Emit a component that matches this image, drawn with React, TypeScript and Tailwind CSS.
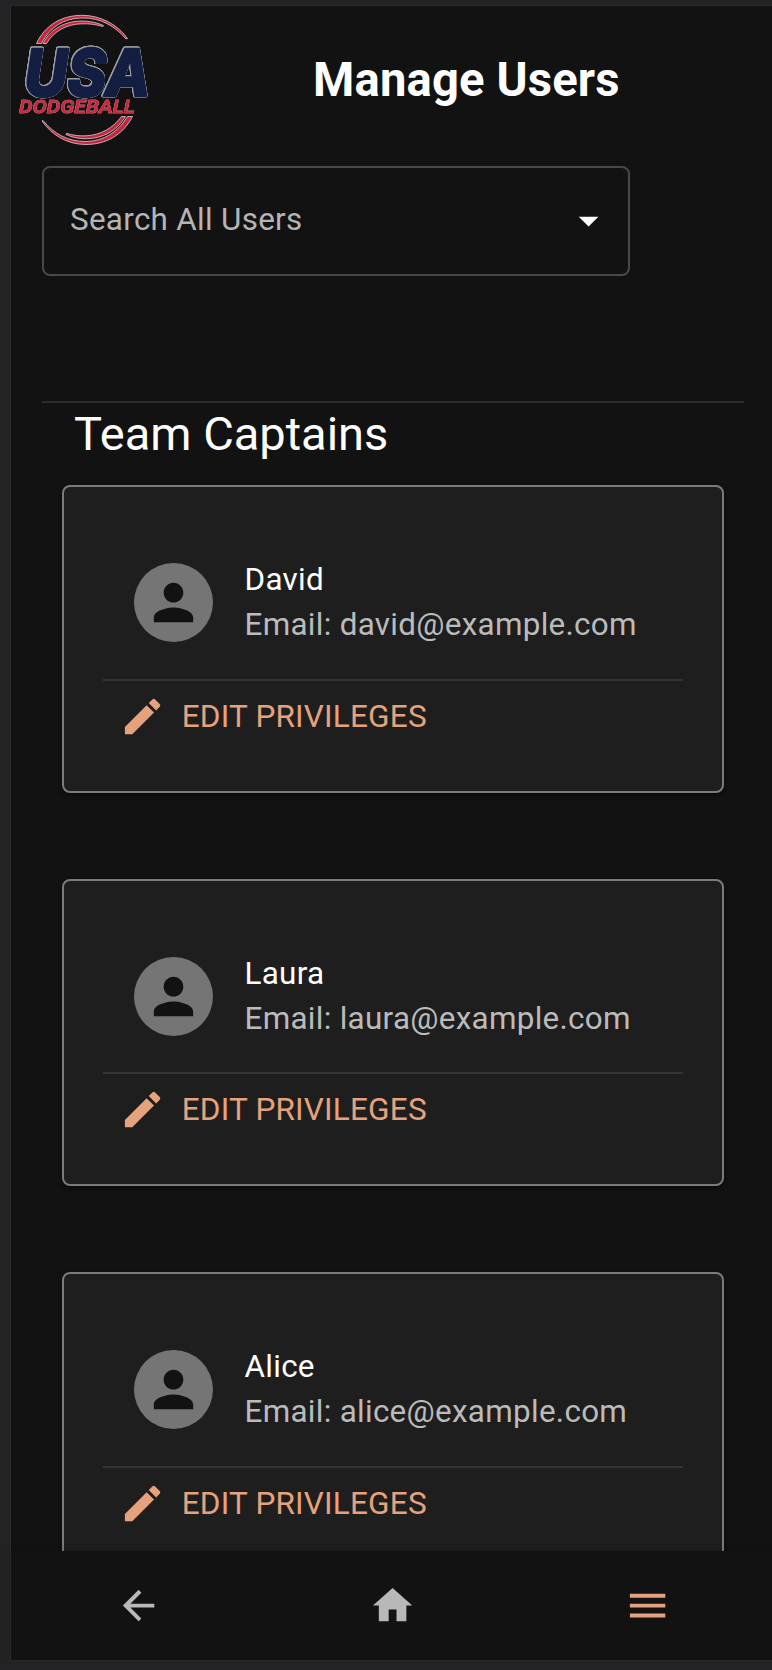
import React from "react";

const users = [
  { name: "David", email: "david@example.com" },
  { name: "Laura", email: "laura@example.com" },
  { name: "Alice", email: "alice@example.com" },
];

const icons = {
  person: "M12 12c2.21 0 4-1.79 4-4s-1.79-4-4-4-4 1.79-4 4 1.79 4 4 4zm0 2c-2.67 0-8 1.34-8 4v2h16v-2c0-2.66-5.33-4-8-4z",
  edit: "M3 17.25V21h3.75L17.81 9.94l-3.75-3.75L3 17.25zM20.71 7.04c.39-.39.39-1.02 0-1.41l-2.34-2.34a.9959.9959 0 0 0-1.41 0l-1.83 1.83 3.75 3.75 1.83-1.83z",
  back: "M20 11H7.83l5.59-5.59L12 4l-8 8 8 8 1.41-1.41L7.83 13H20v-2z",
  home: "M10 20v-6h4v6h5v-8h3L12 3 2 12h3v8z",
  menu: "M3 18h18v-2H3v2zm0-5h18v-2H3v2zm0-7v2h18V6H3z",
  dropDown: "M7 10l5 5 5-5z",
};

function Icon({ name, className = "" }: { name: keyof typeof icons; className?: string }) {
  return (
    <svg viewBox="0 0 24 24" fill="currentColor" className={`shrink-0 ${className}`} aria-hidden="true">
      <path d={icons[name]} />
    </svg>
  );
}

function Logo() {
  return (
    <svg viewBox="17 11 140 140" className="h-[140px] w-[140px] shrink-0 overflow-visible" role="img" aria-label="USA Dodgeball">
      <g stroke="#d9ccd0" strokeWidth="0.8" fill="#c4283f" strokeLinejoin="round">
        <path d="M36.500 43.500C45 25 62 15.300 82 15.300C101 15.300 118 25 127.500 38.500L126 39C115 26 101 18 83 18C64 18 50 27 41.500 43.500Z" />
        <path d="M43 43.500C51 28 66 21 82 21C90 21 97 22.500 103.500 25.500L103 26.500C96 24.500 89 23.500 82 23.800C67 24 54 31 46.500 43.500Z" />
        <path d="M132.500 116.500C123 135 106 144.500 86 144.500C66 144.500 51 134 42 121L43 120.500C54 134 68 141.500 86 141.500C104 141 118 132 127.500 116.500Z" />
        <path d="M125.500 116.500C117 131 103 138.500 86 138.800C79 138.800 72 137.500 66 134.500L66.500 133.300C73 135.500 79 136 86 135.800C101 135 113 128 121.500 116.500Z" />
      </g>
      <text x="24.500" y="95.500" fontFamily="Inter, sans-serif" fontSize="64" fontWeight="800" fontStyle="italic" textLength="126" lengthAdjust="spacingAndGlyphs" strokeLinejoin="round" fill="#131e42" stroke="#131e42" strokeWidth="2.400" className="[filter:drop-shadow(0.7px_0_0_#9a9ea8)_drop-shadow(-0.7px_0_0_#9a9ea8)_drop-shadow(0_0.5px_0_#9a9ea8)_drop-shadow(0_-0.5px_0_#9a9ea8)]">USA</text>
      <text x="19" y="113" fontFamily="Roboto, sans-serif" fontSize="18" fontWeight="500" fontStyle="italic" textLength="116" lengthAdjust="spacingAndGlyphs" fill="#c4283f" stroke="#c4283f" strokeWidth="0.7" className="[filter:drop-shadow(0_0_0.6px_#ffffff)]">DODGEBALL</text>
    </svg>
  );
}

function UserCard({ name, email }: { name: string; email: string }) {
  return (
    <article className="h-[307.500px] w-[662px] shrink-0 rounded-[8px] border-2 border-[#7b7b7b] bg-[#1e1e1e] px-[39px] pt-[60px] shadow-[0_2px_4px_rgba(0,0,0,0.5)]">
      <div className="flex h-[133.500px] items-start border-b-2 border-[#343434] pl-[31px] pt-[16px]">
        <div className="flex size-[79px] items-center justify-center rounded-full bg-[#757575] text-[#121212]">
          <Icon name="person" className="size-[59px]" />
        </div>
        <div className="-mt-[6px] ml-[31.500px] text-[31.400px] leading-[45px] tracking-[0.00938em]">
          <h3 className="text-white">{name}</h3>
          <p className="text-[#bbbbbb]">Email: {email}</p>
        </div>
      </div>
      <button className="mt-[12px] flex items-center gap-[16px] pl-[15.500px] text-[31.500px] leading-[47px] tracking-[0.2px] text-[#e6a27c]">
        <Icon name="edit" className="size-[47.200px]" />
        EDIT PRIVILEGES
      </button>
    </article>
  );
}

export default function App() {
  return (
    <div className="h-[1670px] w-[772px] overflow-hidden bg-[#232325] pl-[10px] pt-[5px] font-[Roboto,sans-serif]">
      <main className="flex h-[1656px] w-[766px] flex-col border border-[#2a2a2b] bg-[#121212]">
        <header className="flex h-[160px] shrink-0 items-start pl-[6px] pt-[5px]">
          <Logo />
          <h1 className="ml-[156px] mt-[41px] whitespace-nowrap text-[47.200px] font-bold leading-[56px] tracking-[0.16px] text-white">Manage Users</h1>
        </header>
        <section className="flex min-h-0 flex-1 flex-col overflow-hidden pl-[31px]">
          <div className="flex h-[110px] w-[588px] shrink-0 items-center justify-between rounded-[8px] border-2 border-[#484848] pl-[26px] pr-[15.500px]">
            <span className="-mt-[2px] text-[31.400px] leading-[46px] tracking-[0.00938em] text-[#b5b5b5]">Search All Users</span>
            <Icon name="dropDown" className="size-[47.200px] text-white" />
          </div>
          <hr className="mt-[125px] w-[702px] shrink-0 border-t-2 border-[#2c2c2c]" />
          <h2 className="ml-[32px] h-[82px] shrink-0 text-[47px] leading-[61px] text-white">Team Captains</h2>
          <div className="ml-[20px] flex flex-col gap-[86px]">
            {users.map((user) => <UserCard key={user.name} {...user} />)}
          </div>
        </section>
        <nav className="relative grid h-[109px] shrink-0 grid-cols-3 place-items-center bg-[#121212] text-[#b8b8b8] shadow-[0_-2px_5px_rgba(0,0,0,0.1)]">
          <button aria-label="Back"><Icon name="back" className="size-[47.200px]" /></button>
          <button aria-label="Home"><Icon name="home" className="size-[47.200px]" /></button>
          <button aria-label="Menu" className="text-[#e6a27c]"><Icon name="menu" className="size-[47.200px]" /></button>
        </nav>
      </main>
    </div>
  );
}
